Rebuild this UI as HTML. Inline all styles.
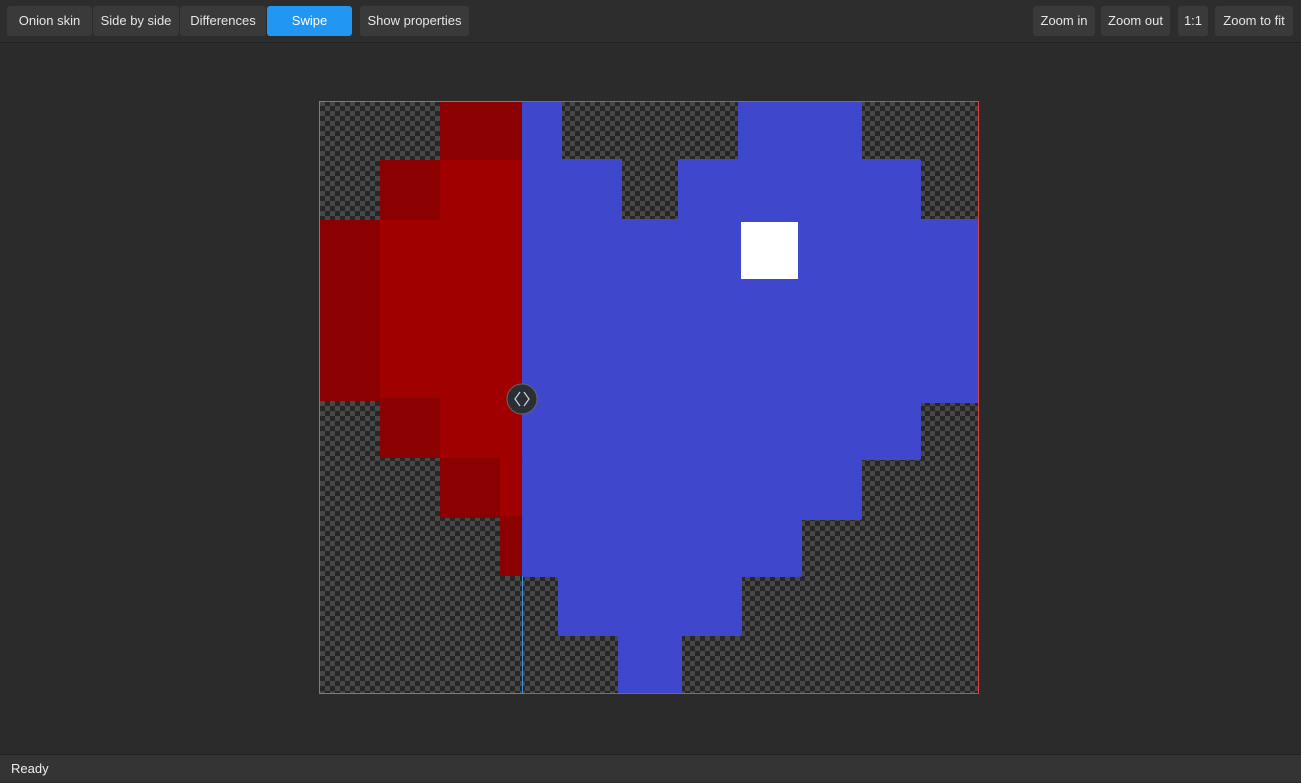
<!DOCTYPE html><html><head><style>
body{margin:0;width:1301px;height:782px;background:#2b2b2b;font-family:"Liberation Sans",sans-serif;overflow:hidden;position:relative}
.tb{position:absolute;left:0;top:0;width:1301px;height:42px;background:#2d2d2d;border-bottom:1px solid #222}
.b{position:absolute;top:6px;height:30px;line-height:30px;background:#3a3a3a;color:#e6e6e6;font-size:13px;text-align:center;border-radius:3px}
.st{position:absolute;left:0;top:754px;width:1301px;height:28px;background:#343434;border-top:1px solid #222;color:#eee;font-size:13px;line-height:28px;padding-left:11px;box-sizing:border-box}
</style></head><body>
<div class="tb">
<div class="b" style="left:7px;width:85px">Onion skin</div>
<div class="b" style="left:93px;width:86px">Side by side</div>
<div class="b" style="left:180px;width:86px">Differences</div>
<div class="b" style="left:267px;width:85px;background:#2196f3;color:#fff">Swipe</div>
<div class="b" style="left:360px;width:109px">Show properties</div>
<div class="b" style="left:1033px;width:62px">Zoom in</div>
<div class="b" style="left:1101px;width:69px">Zoom out</div>
<div class="b" style="left:1178px;width:30px">1:1</div>
<div class="b" style="left:1215px;width:78px">Zoom to fit</div>
</div>
<svg style="position:absolute;left:0;top:0" width="1301" height="782">
<defs><pattern id="c" width="10" height="10" patternUnits="userSpaceOnUse" x="320" y="101"><rect width="10" height="10" fill="#262626"/><rect width="5" height="5" fill="#474747"/><rect x="5" y="5" width="5" height="5" fill="#474747"/></pattern></defs>
<rect x="320" y="101" width="659" height="593" fill="url(#c)"/>
<g fill="#8b0000">
<rect x="440" y="101" width="82" height="59"/>
<rect x="380" y="160" width="60" height="60"/>
<rect x="320" y="220" width="60" height="181"/>
<rect x="380" y="398" width="60" height="60"/>
<rect x="440" y="458" width="60" height="60"/>
<rect x="500" y="516" width="22" height="60"/>
</g>
<g fill="#a00000">
<rect x="440" y="160" width="82" height="60"/>
<rect x="380" y="220" width="142" height="178"/>
<rect x="440" y="398" width="82" height="60"/>
<rect x="500" y="458" width="22" height="58"/>
</g>
<g fill="#3f48cc">
<rect x="522" y="101" width="40" height="59"/>
<rect x="738" y="101" width="124" height="59"/>
<rect x="522" y="159" width="100" height="61"/>
<rect x="678" y="159" width="243" height="61" rx="2"/>
<rect x="522" y="219" width="457" height="184"/>
<rect x="522" y="402" width="399" height="58" rx="2"/>
<rect x="522" y="459" width="340" height="61" rx="2"/>
<rect x="522" y="519" width="280" height="58" rx="2"/>
<rect x="558" y="576" width="184" height="60" rx="2"/>
<rect x="618" y="635" width="64" height="59"/>
</g>
<rect x="741" y="222" width="57" height="57" fill="#fff"/>
<g stroke-width="1" fill="none">
<path d="M522 101.5 H319.5 V693.5 H522" stroke="#3da83d"/>
<path d="M522 101.5 H978.5 V693.5 H522" stroke="#e04040"/>
</g>
<line x1="522.5" y1="576" x2="522.5" y2="694" stroke="#3a8ee0"/>
<circle cx="522" cy="399" r="15" fill="#2a2f36" stroke="#666" stroke-width="1"/>
<path d="M520 392 L515 399 L520 406 M524 392 L529 399 L524 406" fill="none" stroke="#ccc" stroke-width="1.3"/>
</svg>
<div class="st">Ready</div>
</body></html>
